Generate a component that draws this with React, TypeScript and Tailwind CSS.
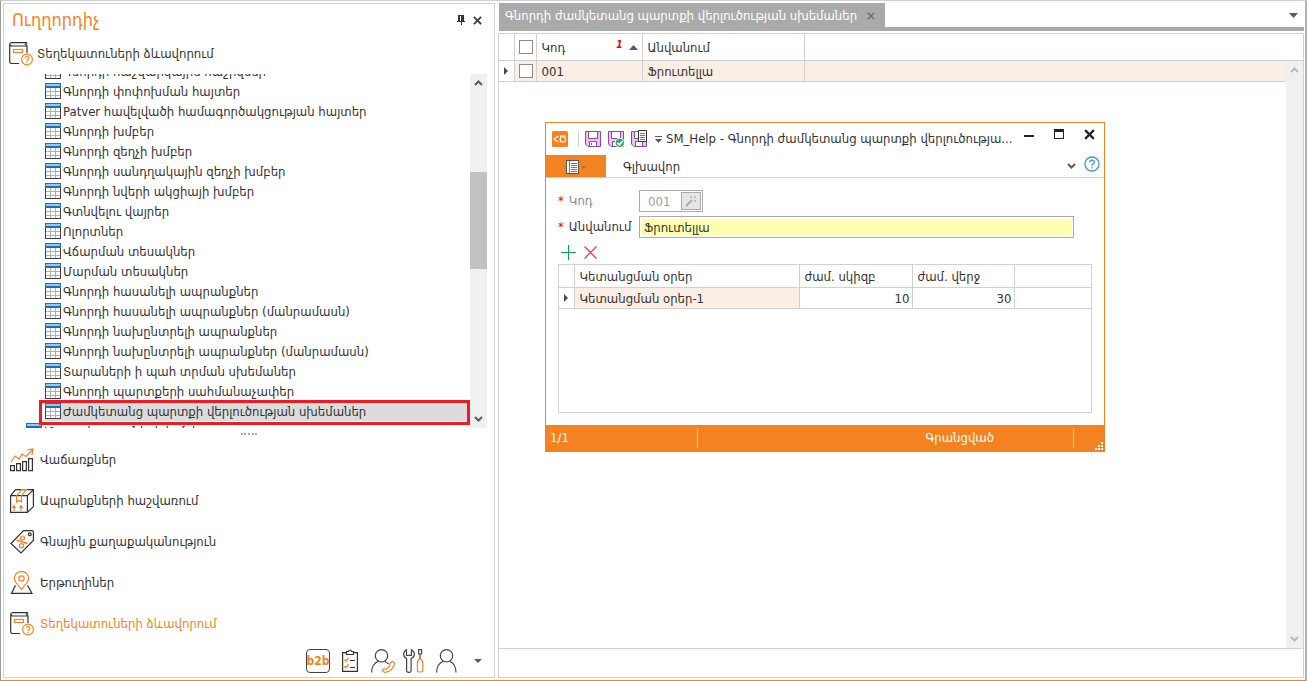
import React from "react";

const treeItems = [
  "Գնորդի հաշվարկային հաշիվներ",
  "Գնորդի փոփոխման հայտեր",
  "Patver հավելվածի համագործակցության հայտեր",
  "Գնորդի խմբեր",
  "Գնորդի զեղչի խմբեր",
  "Գնորդի սանդղակային զեղչի խմբեր",
  "Գնորդի նվերի ակցիայի խմբեր",
  "Գտնվելու վայրեր",
  "Ոլորտներ",
  "Վճարման տեսակներ",
  "Մարման տեսակներ",
  "Գնորդի հասանելի ապրանքներ",
  "Գնորդի հասանելի ապրանքներ (մանրամասն)",
  "Գնորդի նախընտրելի ապրանքներ",
  "Գնորդի նախընտրելի ապրանքներ (մանրամասն)",
  "Տարաների ի պահ տրման սխեմաներ",
  "Գնորդի պարտքերի սահմանաչափեր",
  "Ժամկետանց պարտքի վերլուծության սխեմաներ",
];

function TableIcon() {
  return (
    <svg width="16" height="16" viewBox="0 0 16 16" shapeRendering="crispEdges" className="shrink-0">
      <rect width="16" height="16" fill="#fff" />
      <path d="M5.500 5v10M10.500 5v10M1 8.500h14M1 12.500h14" stroke="#b0b0b0" fill="none" />
      <path d="M.5 5v10.500h15V5" stroke="#404040" fill="none" />
      <rect width="16" height="5" fill="#1c6fb8" />
      <rect x="1" y="1" width="14" height="2" fill="#92c9ef" />
    </svg>
  );
}

function BookIcon() {
  return (
    <svg width="24" height="24" viewBox="0 0 24 24" fill="none" strokeWidth="1.2" className="shrink-0">
      <path d="M18 11V4H3C.1 4 .1.600 3 .600h15M18 .600 16.500 2.300 18 4M.700 2.500v17.300c0 1 .700 1.700 1.700 1.700H10" stroke="#333" />
      <rect x="4.500" y="7.500" width="9" height="3" stroke="#f58220" />
      <circle cx="18" cy="17.500" r="5.400" fill="#fff" stroke="#f58220" />
      <path d="M16.200 16.300c0-2.500 3.700-2.300 3.700-.2 0 1.400-1.900 1.300-1.900 3M18 20v1" stroke="#f58220" />
    </svg>
  );
}

function SalesIcon() {
  return (
    <svg width="24" height="24" viewBox="0 0 24 24" fill="none" strokeWidth="1.200" className="shrink-0">
      <path d="M.6 17.600h3.800v5H.6zM6.600 15.600h3.800v7H6.600zM12.600 13.600h3.800v9h-3.800zM18.600 10.600h3.800v12h-3.800z" stroke="#333" />
      <path d="m1 14 4-6 4 3 3-5 4 2.500L22.500 1.500M17 2l6-1-1 6" stroke="#f58220" />
    </svg>
  );
}

function BoxIcon() {
  return (
    <svg width="24" height="24" viewBox="0 0 24 24" fill="none" strokeWidth="1.200" className="shrink-0">
      <path d="M.6 6.600h16.800v16.800H.6zM.6 6.600 5.500.6h18L17.400 6.600M23.400.6v17L17.400 23.400" stroke="#333" />
      <path d="M6.600 13V6.600L11.500.6h5L11.500 6.600V13l-2.400-1.500zM4 22v-5M11 22v-5" stroke="#f58220" />
      <path d="m1.800 19 2.200-3.500L6.200 19zM8.800 19l2.200-3.500 2.200 3.500z" fill="#f58220" />
    </svg>
  );
}

function TagIcon() {
  return (
    <svg width="24" height="24" viewBox="0 0 24 24" fill="none" strokeWidth="1.200" className="shrink-0">
      <path d="M13.500.6H22q1.400 0 1.400 1.400v8.500L11 23 1 13.500z" stroke="#333" />
      <circle cx="19.800" cy="4.300" r="1.400" stroke="#333" />
      <path d="m6.500 10 11 3.500" stroke="#f58220" strokeWidth="1.500" />
      <circle cx="12.500" cy="8" r="2" stroke="#f58220" />
      <circle cx="11.500" cy="15.700" r="2.100" stroke="#f58220" />
    </svg>
  );
}

function RouteIcon() {
  return (
    <svg width="24" height="24" viewBox="0 0 24 24" fill="none" strokeWidth="1.200" className="shrink-0">
      <path d="M6 15H5L1.500 22.400h20.500L18 15h-1" stroke="#333" />
      <path d="M11.500 18.500 6 11.500C2.500 6.500 5.500.7 11.500.7s9 5.800 5.500 10.800z" stroke="#f58220" />
      <circle cx="11.500" cy="7.500" r="2.700" stroke="#f58220" />
    </svg>
  );
}

function ClipboardIcon() {
  return (
    <svg width="18" height="24" viewBox="0 0 18 24" fill="none" strokeWidth="1.200">
      <path d="M5 3.600H1.600v18.800h14.800V3.600H13M5.500 5.500v-3h2c.5-2 2.500-2 3 0h2v3z" stroke="#333" />
      <path d="m3.500 10.500 1.300 1.500L7.500 9M3.500 17l1.300 1.500L7.500 15.500" stroke="#f58220" />
      <path d="M9 11.500h5M9 18.500h5" stroke="#333" />
    </svg>
  );
}

function PersonIcon({ phone }: { phone?: boolean }) {
  return (
    <svg width="24" height="24" viewBox="0 0 24 24" fill="none" strokeWidth="1.200">
      <circle cx="10.500" cy="6.800" r="6.200" stroke="#444" />
      <path
        d={
          phone
            ? "M.6 23.400c0-6 2.500-9.400 6.700-11.200M13.500 12.200c1.600.5 3 1.600 4 2.800"
            : "M.6 23.400c0-6 2.500-9.400 6.700-11.200M13.700 12.200c4 1.800 6.300 5.200 6.300 11.200"
        }
        stroke="#444"
      />
      {phone && (
        <path
          d="M20.800 12.600c.9-.6 2.600.6 2.600 2.200 0 3.700-4.600 8.400-9.200 8.600-1.700 0-3.200-2.200-2.200-3.200 1-.9 2.600.3 3.400-.2 1.300-.8 2.500-2 3.200-3.400.4-1-.6-3 2.200-4z"
          stroke="#f58220"
        />
      )}
    </svg>
  );
}

function ToolsIcon() {
  return (
    <svg width="21" height="24" viewBox="0 0 21 24" fill="none" strokeWidth="1.200">
      <path d="M3.500.8C1.400 2 .6 3.500.6 5.200c0 2.200 1.400 3.600 3 4.300v12c0 2.500 4.500 2.500 4.500 0v-12c1.800-.7 3.300-2.100 3.300-4.300 0-1.700-1-3.200-3-4.400v5.500H3.500z" stroke="#444" />
      <path d="M15.600.7h3v4.300h-3zM17.100 5v5" stroke="#444" />
      <path d="M17.100 9.500c-2 1-2.700 3-2.700 5v7c0 2 5.400 2 5.400 0v-7c0-2-.7-4-2.700-5z" stroke="#f58220" />
    </svg>
  );
}

function Chevron({ up, light }: { up?: boolean; light?: boolean }) {
  return (
    <svg width="9" height="6" viewBox="0 0 9 6" fill="none">
      <path d={up ? "M1 5 4.500 1.500 8 5" : "M1 1l3.500 3.500L8 1"} stroke={light ? "#b8b8b8" : "#5c5c5c"} strokeWidth="2" />
    </svg>
  );
}

function CloseIcon({ size, color }: { size: number; color: string }) {
  return (
    <svg width={size} height={size} viewBox="0 0 10 10" fill="none">
      <path d="m1 1 8 8M9 1 1 9" stroke={color} strokeWidth="2" />
    </svg>
  );
}

function RowMarker() {
  return (
    <svg width="4" height="8" viewBox="0 0 4 8" className="mx-auto">
      <path d="M0 0l4 4-4 4z" fill="#4a4a4a" />
    </svg>
  );
}

function Floppy({ kind }: { kind: "save" | "check" | "doc" }) {
  return (
    <svg width="18" height="18" viewBox="0 0 18 18" fill="none">
      <path d="M1.500 1.500h15v15H4l-2.500-2.500z" fill="#e3c8ea" stroke="#93479f" />
      <path d="M4.500 1.500h9v7h-9z" fill="#fff" stroke="#93479f" />
      <path d="M5.500 11.500h7v5h-7z" fill="#fff" stroke="#93479f" />
      {kind === "save" && <path d="M7.500 13v2" stroke="#93479f" />}
      {kind === "check" && (
        <>
          <circle cx="12.800" cy="12.800" r="4.700" fill="#3aa76d" stroke="#fff" />
          <path d="m10.300 12.800 2 2 3.300-3.500" stroke="#fff" strokeWidth="1.500" />
        </>
      )}
      {kind === "doc" && (
        <>
          <path d="M8.500.5h8v11h-8z" fill="#fff" stroke="#333" />
          <path d="M10 3.500h5M10 5.500h5M10 7.500h5M10 9.500h5" stroke="#2f86cf" />
        </>
      )}
    </svg>
  );
}

const sections = [
  { label: "Վաճառքներ", icon: <SalesIcon /> },
  { label: "Ապրանքների հաշվառում", icon: <BoxIcon /> },
  { label: "Գնային քաղաքականություն", icon: <TagIcon /> },
  { label: "Երթուղիներ", icon: <RouteIcon /> },
  { label: "Տեղեկատուների ձևավորում", icon: <BookIcon />, active: true },
];

function Sidebar() {
  return (
    <aside className="flex w-[492px] shrink-0 flex-col border border-[#d0d0d0]">
      <div className="flex h-8 items-center pr-3 pl-2">
        <h1 className="flex-1 text-lg leading-8 text-[#f58220]">Ուղղորդիչ</h1>
        <button aria-label="Ամրացնել" className="mr-2">
          <svg width="8" height="10" viewBox="0 0 8 10" shapeRendering="crispEdges">
            <path d="M1 0h6v6h1v1H4.500v3h-1V7H0V6h1z" fill="#333" />
            <path d="M3 1h1v5H3z" fill="#fff" />
          </svg>
        </button>
        <button aria-label="Փակել">
          <CloseIcon size={9} color="#3a3a3a" />
        </button>
      </div>
      <div className="flex h-9 items-center gap-1 pl-[5px]">
        <BookIcon />
        <h2>Տեղեկատուների ձևավորում</h2>
      </div>
      <div className="mt-0.5 flex h-[354px] shrink-0 pr-[7px]">
        <div className="min-w-0 flex-1 overflow-hidden">
          <ul className="-mt-[13px] pl-[41px]">
            {treeItems.map((item, i) => {
              const selected = i === treeItems.length - 1;
              return (
                <li key={item} className={selected ? "relative bg-[#dcdcdc]" : "relative"}>
                  <button className="flex h-5 w-full items-center gap-0.5 text-left whitespace-nowrap">
                    <TableIcon />
                    <span className="pt-0.5">{item}</span>
                  </button>
                  {selected && (
                    <span className="pointer-events-none absolute -top-px right-0 -bottom-1 -left-1.5 border-3 border-[#ed1c24]" />
                  )}
                </li>
              );
            })}
            <li className="-ml-[19px] flex h-5 items-center gap-0.5">
              <TableIcon />
              <span className="pt-0.5">Մատակարարների խմբեր</span>
            </li>
          </ul>
        </div>
        <div className="flex w-[17px] flex-col items-center bg-[#f0f0f0] py-1.5">
          <button aria-label="Վերև">
            <Chevron up />
          </button>
          <div className="mt-[86px] h-[97px] w-full shrink-0 bg-[#c2c2c2]" />
          <div className="flex-1" />
          <button aria-label="Ներքև">
            <Chevron />
          </button>
        </div>
      </div>
      <div className="flex h-[11px] items-center justify-center">
        <span className="w-4 border-t-2 border-dotted border-[#aaa]" />
      </div>
      <nav className="flex flex-col">
        {sections.map((s) => (
          <a
            key={s.label}
            href="#"
            className={
              s.active
                ? "flex h-[41px] items-center gap-1.5 pl-1.5 text-[#f58220]"
                : "flex h-[41px] items-center gap-1.5 pl-1.5"
            }
          >
            {s.icon}
            {s.label}
          </a>
        ))}
      </nav>
      <div className="mt-auto flex h-8 items-center justify-end gap-2 pr-3">
        <button className="mr-[3px] flex h-6 w-6 items-center justify-center rounded-sm border border-[#444] text-xs leading-5 font-bold text-[#f58220]">
          b2b
        </button>
        <button aria-label="Առաջադրանքներ" className="mr-1">
          <ClipboardIcon />
        </button>
        <button aria-label="Կապ">
          <PersonIcon phone />
        </button>
        <button aria-label="Գործիքներ" className="mr-1">
          <ToolsIcon />
        </button>
        <button aria-label="Օգտատեր">
          <PersonIcon />
        </button>
        <button aria-label="Ավելին" className="ml-1.5">
          <svg width="8" height="4" viewBox="0 0 8 4">
            <path d="M0 0h8L4 4z" fill="#5a5a5a" />
          </svg>
        </button>
      </div>
    </aside>
  );
}

function MainArea() {
  return (
    <main className="flex min-w-0 flex-1 flex-col">
      <div className="ml-px flex h-7 items-start justify-between border-b-4 border-[#aaa]">
        <div className="flex h-6 items-center gap-2.5 bg-[#aaa] pt-0.5 pr-2.5 pl-1.5 whitespace-nowrap text-white">
          Գնորդի ժամկետանց պարտքի վերլուծության սխեմաներ
          <button aria-label="Փակել ներդիրը">
            <CloseIcon size={8} color="#707070" />
          </button>
        </div>
        <button aria-label="Ներդիրներ" className="mt-2.5 mr-1.5">
          <svg width="9" height="5" viewBox="0 0 9 5">
            <path d="M0 0h9L4.500 5z" fill="#5a5a5a" />
          </svg>
        </button>
      </div>
      <section className="mt-0.5 flex flex-1 flex-col border border-[#d0d0d0]">
        <div className="flex flex-1">
          <div className="min-w-0 flex-1">
            <table className="w-full table-fixed border-collapse text-left">
              <colgroup>
                <col className="w-[15px]" />
                <col className="w-[22px]" />
                <col className="w-[106px]" />
                <col className="w-[162px]" />
                <col />
              </colgroup>
              <thead>
                <tr className="h-[26px] border-b border-[#d0d0d0]">
                  <th className="border-r border-[#d0d0d0]" />
                  <th className="border-r border-[#d0d0d0] pt-px pl-0.5">
                    <input type="checkbox" aria-label="Ընտրել բոլորը" className="mx-auto block size-3.5 appearance-none border border-[#8a8a8a] bg-white" />
                  </th>
                  <th className="border-r border-[#d0d0d0] pt-0.5 pr-1 pl-[5px] font-normal">
                    <span className="flex items-center">
                      <span className="flex-1">Կոդ</span>
                      <span className="mr-1.5 mb-1.5 text-[10px] leading-3 font-bold text-red-600 italic">1</span>
                      <svg width="9" height="5" viewBox="0 0 9 5">
                        <path d="M0 5h9L4.500 0z" fill="#5a5a5a" />
                      </svg>
                    </span>
                  </th>
                  <th className="border-r border-[#d0d0d0] pt-0.5 pr-1 pl-[5px] font-normal">Անվանում</th>
                  <th />
                </tr>
              </thead>
              <tbody>
                <tr className="h-[21px] border-b border-[#d0d0d0] bg-[#fbeee5]">
                  <td className="border-r border-[#d0d0d0] bg-white">
                    <RowMarker />
                  </td>
                  <td className="border-r border-[#d0d0d0] pt-px pl-0.5">
                    <input type="checkbox" aria-label="Ընտրել 001" className="mx-auto block size-3.5 appearance-none border border-[#8a8a8a] bg-white" />
                  </td>
                  <td className="border-r border-[#d0d0d0] pt-0.5 pr-1 pl-[5px]">001</td>
                  <td className="border-r border-[#d0d0d0] pt-0.5 pr-1 pl-[5px]">Ֆրուտելլա</td>
                  <td />
                </tr>
              </tbody>
            </table>
          </div>
          <div className="flex w-[17px] flex-col">
            <div className="h-[27px] border-b border-[#d0d0d0]" />
            <div className="flex flex-1 flex-col items-center justify-between bg-[#f0f0f0] py-1.5">
              <button aria-label="Վերև">
                <Chevron up light />
              </button>
              <button aria-label="Ներքև">
                <Chevron light />
              </button>
            </div>
          </div>
        </div>
        <div className="h-[29px] border-t border-[#d0d0d0]" />
      </section>
    </main>
  );
}

function HelpDialog() {
  return (
    <div role="dialog" aria-labelledby="dlg-title" className="absolute top-[121px] left-[544px] flex h-[330px] w-[560px] flex-col border border-[#f58220] bg-white">
      <header className="flex h-8 items-center pr-[9px] pl-1.5">
        <svg width="16" height="16" viewBox="0 0 16 16" fill="none">
          <rect width="16" height="16" rx="1.500" fill="#f58220" />
          <path d="M6.500 5 2 8l3 2.500h2M8 5h6M11 5c-4 1-3.500 6 0 6s3.500-5 0-5" stroke="#fff" strokeWidth="1.200" />
        </svg>
        <span className="mr-[5px] ml-2.5 h-4 w-px bg-[#d0d0d0]" />
        <div className="flex items-center gap-[5px]">
          <button aria-label="Պահպանել">
            <Floppy kind="save" />
          </button>
          <button aria-label="Գրանցել">
            <Floppy kind="check" />
          </button>
          <button aria-label="Պահպանել և ստեղծել նոր">
            <Floppy kind="doc" />
          </button>
          <button aria-label="Կարգավորել վահանակը">
            <svg width="7" height="7" viewBox="0 0 7 7" className="ml-0.5">
              <path d="M0 0h7v1H0zM0 3h7L3.500 7z" fill="#5a5a5a" />
            </svg>
          </button>
        </div>
        <h2 id="dlg-title" className="ml-1 min-w-0 flex-1 whitespace-nowrap">
          SM_Help - Գնորդի ժամկետանց պարտքի վերլուծությա...
        </h2>
        <div className="mb-2.5 flex items-center gap-5">
          <button aria-label="Ծալել">
            <svg width="10" height="10" viewBox="0 0 10 10">
              <path d="M0 6h10v2H0z" fill="#222" />
            </svg>
          </button>
          <button aria-label="Մեծացնել">
            <svg width="10" height="10" viewBox="0 0 10 10" shapeRendering="crispEdges">
              <path d="M0 0h10v10H0zM1 3v6h8V3z" fill="#222" fillRule="evenodd" />
            </svg>
          </button>
          <button aria-label="Փակել պատուհանը">
            <CloseIcon size={11} color="#222" />
          </button>
        </div>
      </header>
      <div className="flex h-[23px] items-center border-b border-[#d0d0d0] pr-1">
        <button aria-label="Ընտրացանկ" className="flex h-[22px] w-[60px] items-center gap-0.5 bg-[#f58220] pt-0.5 pl-5">
          <svg width="13" height="14" viewBox="0 0 13 14" fill="none" shapeRendering="crispEdges">
            <path d="M.5.5h12v13H.5z" fill="#fff" stroke="#555" />
            <path d="M3.500 1v12M5 3.500h6M5 5.500h6M5 7.500h6M5 9.500h6M5 11.500h6" stroke="#777" />
          </svg>
          <svg width="5" height="3" viewBox="0 0 5 3">
            <path d="M0 0h5L2.500 3z" fill="#8a7a6c" />
          </svg>
        </button>
        <button className="ml-[17px] flex-1 pt-0.5 text-left">Գլխավոր</button>
        <button aria-label="Ծալել ժապավենը" className="mr-2">
          <Chevron />
        </button>
        <button aria-label="Օգնություն" className="mb-1">
          <svg width="16" height="16" viewBox="0 0 16 16" fill="none">
            <circle cx="8" cy="8" r="7" stroke="#3a9bd6" strokeWidth="1.300" />
            <path d="M5.700 6.300c0-3 4.700-2.800 4.700-.2C10.400 7.800 8 7.800 8 10M8 11v1.500" stroke="#3a9bd6" strokeWidth="1.300" />
          </svg>
        </button>
      </div>
      <form className="flex flex-1 flex-col p-3">
        <div className="flex h-[22px] items-center">
          <label htmlFor="code" className="w-[81px] whitespace-nowrap text-[#8a8a8a]">
            <span className="mr-[5px] text-red-600">*</span>
            Կոդ
          </label>
          <div className="flex h-[22px] w-16 items-center border border-[#ababab] p-px">
            <input id="code" readOnly defaultValue="001" className="w-0 flex-1 pt-0.5 pl-[7px] text-[#a0a0a0] outline-none" />
            <button type="button" aria-label="Գեներացնել" className="flex h-[18px] w-5 items-center justify-center border border-[#ababab] bg-[#e6e6e6]">
              <svg width="12" height="12" viewBox="0 0 12 12" fill="none">
                <path d="m1 11 6-6" stroke="#ababab" strokeWidth="2" />
                <path d="M5 1h2v2H5zM9 1h2v2H9zM9 5h2v2H9z" fill="#bdbdbd" />
              </svg>
            </button>
          </div>
        </div>
        <div className="mt-1 flex h-[22px] items-center">
          <label htmlFor="name" className="w-[81px] whitespace-nowrap">
            <span className="mr-[5px] text-red-600">*</span>
            Անվանում
          </label>
          <div className="mr-[18px] flex h-[22px] flex-1 border border-[#ababab] p-0.5">
            <input id="name" defaultValue="Ֆրուտելլա" className="w-full bg-[#ffffb0] px-0.5 pt-0.5 outline-none" />
          </div>
        </div>
        <div className="flex h-[26px] items-center gap-2 pt-[3px] pl-[3px]">
          <button type="button" aria-label="Ավելացնել">
            <svg width="15" height="15" viewBox="0 0 15 15" shapeRendering="crispEdges">
              <path d="M7 0h1v7h7v1H8v7H7V8H0V7h7z" fill="#0aa34a" />
            </svg>
          </button>
          <button type="button" aria-label="Ջնջել">
            <svg width="13" height="13" viewBox="0 0 13 13">
              <path d="m.5.500 12 12M12.500.500l-12 12" stroke="#e03a3a" strokeWidth="1.200" />
            </svg>
          </button>
        </div>
        <div className="flex-1 border border-[#d0d0d0]">
          <table className="w-full table-fixed border-collapse text-left">
            <colgroup>
              <col className="w-[15px]" />
              <col className="w-[225px]" />
              <col className="w-[113px]" />
              <col className="w-[102px]" />
              <col />
            </colgroup>
            <thead>
              <tr className="h-[22px] border-b border-[#d0d0d0]">
                <th className="border-r border-[#d0d0d0]" />
                <th className="border-r border-[#d0d0d0] pt-0.5 pl-[5px] font-normal">Կետանցման օրեր</th>
                <th className="border-r border-[#d0d0d0] pt-0.5 pl-[5px] font-normal">ժամ. սկիզբ</th>
                <th className="border-r border-[#d0d0d0] pt-0.5 pl-[5px] font-normal">ժամ. վերջ</th>
                <th />
              </tr>
            </thead>
            <tbody>
              <tr className="h-[21px] border-b border-[#d0d0d0]">
                <td className="border-r border-[#d0d0d0]">
                  <RowMarker />
                </td>
                <td className="border-r border-[#d0d0d0] bg-[#fbeee5] pt-0.5 pl-[5px]">Կետանցման օրեր-1</td>
                <td className="border-r border-[#d0d0d0] pt-0.5 pr-0.5 text-right">10</td>
                <td className="border-r border-[#d0d0d0] pt-0.5 pr-0.5 text-right">30</td>
                <td />
              </tr>
            </tbody>
          </table>
        </div>
      </form>
      <footer className="flex h-[26px] items-center bg-[#f58220] text-white">
        <span className="w-[152px] border-r border-[#fbd3b0] pl-1 leading-5">1/1</span>
        <span className="flex-1 border-r border-[#fbd3b0] pr-[79px] text-right leading-5">Գրանցված</span>
        <svg width="30" height="26" viewBox="0 0 30 26" shapeRendering="crispEdges">
          <path d="M27 17h2v2h-2zM24 20h2v2h-2zM27 20h2v2h-2zM21 23h2v2h-2zM24 23h2v2h-2zM27 23h2v2h-2z" fill="#fff" />
        </svg>
      </footer>
    </div>
  );
}

export default function App() {
  return (
    <div className='relative flex min-h-screen gap-[3px] border-t border-r-2 border-b border-l border-t-[#d0d0d0] border-r-[#a8b4bd] border-b-[#f58220] border-l-[#9a9a9a] bg-white pt-0.5 pr-px pb-0.5 pl-0.5 font-["DejaVu_Sans_Condensed","DejaVu_Sans",sans-serif] text-[13px] leading-4 text-[#333]'>
      <Sidebar />
      <MainArea />
      <HelpDialog />
    </div>
  );
}
